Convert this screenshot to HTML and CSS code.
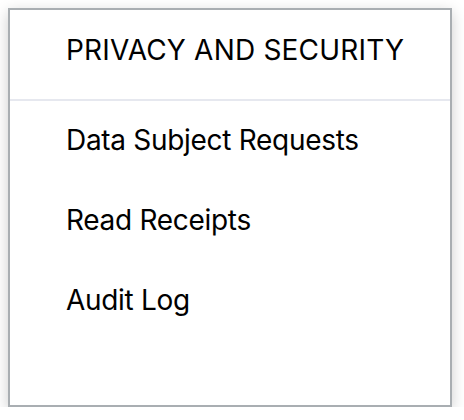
FILE: index.html
```html
<!DOCTYPE html>
<html>
<head>
<meta charset="utf-8">
<link rel="stylesheet" href="styles.css">
</head>
<body>
<div class="page">
  <div class="card">
    <div class="card-header">PRIVACY AND SECURITY</div>
    <ul class="menu">
      <li class="menu-item">Data Subject Requests</li>
      <li class="menu-item">Read Receipts</li>
      <li class="menu-item">Audit Log</li>
    </ul>
  </div>
</div>
</body>
</html>
```
FILE: styles.css
```css
html, body {
  margin: 0;
  padding: 0;
  background: #ffffff;
}
.page {
  padding: 8px 0 0 8px;
}
.card {
  box-sizing: border-box;
  width: 444px;
  height: 399px;
  border: 2px solid #a9aeb2;
  background: #ffffff;
  box-shadow: 0 4px 14px rgba(0, 0, 0, 0.2);
  font-family: Inter, "Noto Sans", sans-serif;
  color: #000000;
  display: flex;
  flex-direction: column;
}
.card-header {
  box-sizing: border-box;
  height: 91px;
  padding: 26px 0 0 56px;
  border-bottom: 2px solid #e6e8ef;
  font-size: 28px;
  line-height: 28px;
  letter-spacing: 0.2px;
}
.menu {
  list-style: none;
  margin: 0;
  padding: 0;
}
.menu-item {
  box-sizing: border-box;
  height: 80px;
  padding: 25px 0 0 56px;
  font-size: 28px;
  line-height: 28px;
  letter-spacing: -0.3px;
}
```
